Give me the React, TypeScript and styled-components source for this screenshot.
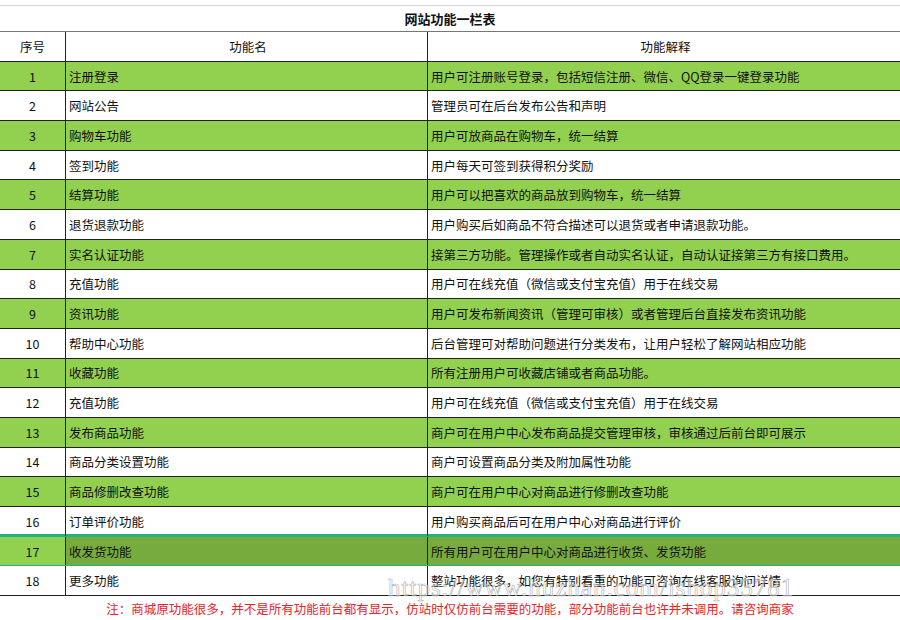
import styled, { createGlobalStyle } from 'styled-components'

const Global = createGlobalStyle`
  body { margin: 0; background: #fff; font-family: "Noto Sans CJK SC", "Noto Sans", sans-serif; }
`

const rows: [string, string, string][] = [
  ['1', '注册登录', '用户可注册账号登录，包括短信注册、微信、QQ登录一键登录功能'],
  ['2', '网站公告', '管理员可在后台发布公告和声明'],
  ['3', '购物车功能', '用户可放商品在购物车，统一结算'],
  ['4', '签到功能', '用户每天可签到获得积分奖励'],
  ['5', '结算功能', '用户可以把喜欢的商品放到购物车，统一结算'],
  ['6', '退货退款功能', '用户购买后如商品不符合描述可以退货或者申请退款功能。'],
  ['7', '实名认证功能', '接第三方功能。管理操作或者自动实名认证，自动认证接第三方有接口费用。'],
  ['8', '充值功能', '用户可在线充值（微信或支付宝充值）用于在线交易'],
  ['9', '资讯功能', '用户可发布新闻资讯（管理可审核）或者管理后台直接发布资讯功能'],
  ['10', '帮助中心功能', '后台管理可对帮助问题进行分类发布，让用户轻松了解网站相应功能'],
  ['11', '收藏功能', '所有注册用户可收藏店铺或者商品功能。'],
  ['12', '充值功能', '用户可在线充值（微信或支付宝充值）用于在线交易'],
  ['13', '发布商品功能', '商户可在用户中心发布商品提交管理审核，审核通过后前台即可展示'],
  ['14', '商品分类设置功能', '商户可设置商品分类及附加属性功能'],
  ['15', '商品修删改查功能', '商户可在用户中心对商品进行修删改查功能'],
  ['16', '订单评价功能', '用户购买商品后可在用户中心对商品进行评价'],
  ['17', '收发货功能', '所有用户可在用户中心对商品进行收货、发货功能'],
  ['18', '更多功能', '整站功能很多，如您有特别看重的功能可咨询在线客服询问详情'],
]

const Sheet = styled.div`
  position: relative;
  width: 900px;
  height: 620px;
  overflow: hidden;
  font-size: 12.5px;
  color: #111;
`

const TopStrip = styled.div`
  height: 5px;
  border-bottom: 1px solid #d4d8e0;
`

const Title = styled.div`
  height: 25px;
  line-height: 25px;
  text-align: center;
  font-weight: bold;
  font-size: 13px;
  border-bottom: 1px solid #777;
`

const Row = styled.div<{ $fill: string; $sel?: boolean }>`
  display: grid;
  grid-template-columns: 65px 362px 1fr;
  height: 28.7px;
  background: ${p => p.$fill};
  border-bottom: ${p => (p.$sel ? '3px solid #21b383' : '1px solid #222')};
  border-top: ${p => (p.$sel ? '3px solid #21b383' : 'none')};
  margin-top: ${p => (p.$sel ? '-3px' : '0')};
  margin-bottom: ${p => (p.$sel ? '-2px' : '0')};
`

const Cell = styled.div<{ $center?: boolean; $fill?: string }>`
  display: flex;
  align-items: center;
  justify-content: ${p => (p.$center ? 'center' : 'flex-start')};
  padding-left: ${p => (p.$center ? '0' : '3px')};
  border-left: ${p => (p.$center ? 'none' : '1px solid #222')};
  background: ${p => p.$fill || 'transparent'};
  white-space: nowrap;
  overflow: hidden;
`

const Note = styled.div`
  text-align: center;
  color: #e8222a;
  font-size: 12.5px;
  margin-top: 3px;
`

const Watermark = styled.div`
  position: absolute;
  left: 388px;
  top: 574px;
  font-family: "Liberation Serif", serif;
  font-size: 25px;
  letter-spacing: 1px;
  color: rgba(255, 255, 255, 0.5);
  -webkit-text-stroke: 0.7px rgba(150, 150, 150, 0.7);
  pointer-events: none;
`

export default function App() {
  return (
    <Sheet>
      <Global />
      <TopStrip />
      <Title>网站功能一栏表</Title>
      <Row $fill="#fff">
        <Cell $center>序号</Cell>
        <Cell style={{ justifyContent: 'center' }}>功能名</Cell>
        <Cell style={{ justifyContent: 'center' }}>功能解释</Cell>
      </Row>
      {rows.map(([n, name, desc], i) => {
        const green = i % 2 === 0
        const sel = n === '17'
        return (
          <Row key={n} $fill={sel ? '#78ab3e' : green ? '#92d050' : '#fff'} $sel={sel}>
            <Cell $center $fill={sel ? '#92d050' : undefined}>{n}</Cell>
            <Cell>{name}</Cell>
            <Cell>{desc}</Cell>
          </Row>
        )
      })}
      <Note>注：商城原功能很多，并不是所有功能前台都有显示，仿站时仅仿前台需要的功能，部分功能前台也许并未调用。请咨询商家</Note>
      <Watermark>https://www.huzhan.com/ishop33781</Watermark>
    </Sheet>
  )
}
